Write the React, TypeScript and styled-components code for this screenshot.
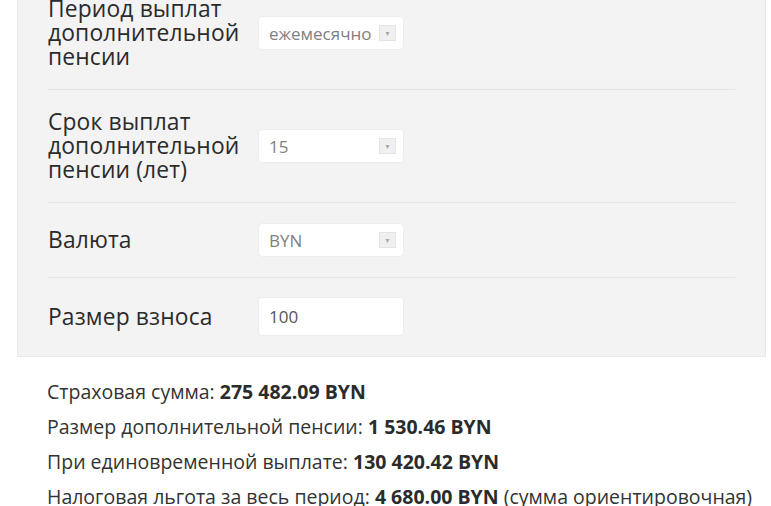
import React from "react";
import styled, { createGlobalStyle } from "styled-components";

const Global = createGlobalStyle`
  html, body { margin: 0; padding: 0; background: #ffffff; overflow: hidden; }
  body { font-family: "Open Sans", "Noto Sans", sans-serif; color: #333; }
`;

const Page = styled.div`
  width: 771px;
  height: 506px;
  overflow: hidden;
`;

const Scroll = styled.div`
  margin-top: -23px;
`;

const Panel = styled.div`
  margin-left: 17px;
  width: 749px;
  background: #f3f3f3;
  border: 1px solid #e9e9e9;
  border-top: none;
  padding: 0 30px 0 30px;
  box-sizing: border-box;
`;

const Row = styled.div<{ $last?: boolean }>`
  display: flex;
  align-items: center;
  padding: 20px 0 ${(p) => (p.$last ? "21px" : "20px")};
  border-bottom: ${(p) => (p.$last ? "none" : "1px solid #e6e6e6")};
`;

const Label = styled.div`
  width: 211px;
  flex: none;
  font-size: 22.8px;
  line-height: 24px;
  color: #2b2b2b;
  letter-spacing: 0.15px;
`;

const Select = styled.div`
  width: 144px;
  height: 32px;
  margin: 1px 0;
  box-sizing: border-box;
  background: #fff;
  border-radius: 4px;
  box-shadow: 0 0 0 1px #ededed;
  display: flex;
  align-items: center;
  justify-content: space-between;
  padding: 0 7px 0 10px;
  font-size: 17px;
  color: #808080;
`;

const Arrow = styled.span`
  width: 17px;
  height: 16px;
  background: #f0f0f0;
  border: 1px solid #e4e4e4;
  box-sizing: border-box;
  display: flex;
  align-items: center;
  justify-content: center;
  font-size: 7px;
  color: #aaa;
`;

const Input = styled.div`
  width: 144px;
  height: 37px;
  box-sizing: border-box;
  background: #fff;
  border-radius: 3px;
  box-shadow: 0 0 0 1px #ededed;
  display: flex;
  align-items: center;
  padding: 0 10px;
  font-size: 17px;
  color: #555;
`;

const Results = styled.div`
  padding: 22px 0 0 47px;
  display: flex;
  flex-direction: column;
  gap: 10px;
`;

const Line = styled.div`
  font-size: 19.5px;
  line-height: 25px;
  color: #333;
  white-space: nowrap;
`;

const Value = styled.b`
  font-weight: 700;
  color: #2b2b2b;
`;

const rows = [
  { label: "Период выплат дополнительной пенсии", value: "ежемесячно", kind: "select" },
  { label: "Срок выплат дополнительной пенсии (лет)", value: "15", kind: "select" },
  { label: "Валюта", value: "BYN", kind: "select" },
  { label: "Размер взноса", value: "100", kind: "input" },
];

export default function App() {
  return (
    <Page>
      <Global />
      <Scroll>
        <Panel>
          {rows.map((r, i) => (
            <Row key={i} $last={i === rows.length - 1}>
              <Label>{r.label}</Label>
              {r.kind === "select" ? (
                <Select>
                  <span>{r.value}</span>
                  <Arrow>▼</Arrow>
                </Select>
              ) : (
                <Input>{r.value}</Input>
              )}
            </Row>
          ))}
        </Panel>
        <Results>
          <Line>
            Страховая сумма: <Value>275 482.09 BYN</Value>
          </Line>
          <Line>
            Размер дополнительной пенсии: <Value>1 530.46 BYN</Value>
          </Line>
          <Line>
            При единовременной выплате: <Value>130 420.42 BYN</Value>
          </Line>
          <Line>
            Налоговая льгота за весь период: <Value>4 680.00 BYN</Value> (сумма ориентировочная)
          </Line>
        </Results>
      </Scroll>
    </Page>
  );
}
